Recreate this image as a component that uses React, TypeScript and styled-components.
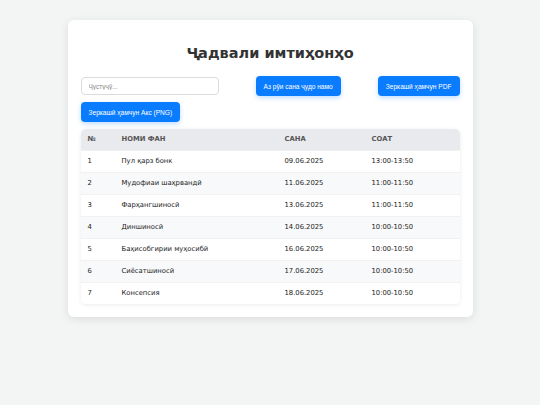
import React from "react";
import styled, { createGlobalStyle } from "styled-components";

const GlobalStyle = createGlobalStyle`
  html, body {
    margin: 0;
    padding: 0;
    background: #f3f4f4;
    font-family: "DejaVu Sans", Verdana, sans-serif;
  }
`;

const Page = styled.div`
  padding: 20px 0;
  display: flex;
  justify-content: center;
`;

const Card = styled.div`
  width: 405px;
  box-sizing: border-box;
  background: #ffffff;
  border-radius: 6px;
  box-shadow: 0 2px 8px rgba(0, 0, 0, 0.1);
  padding: 13px 13px 13px 13px;
`;

const Title = styled.h1`
  margin: 11px 0 14px;
  text-align: center;
  font-family: "DejaVu Sans", Verdana, sans-serif;
  font-size: 14.5px;
  line-height: 18px;
  font-weight: bold;
  color: #333333;
`;

const Controls = styled.div`
  display: flex;
  flex-wrap: wrap;
  justify-content: space-between;
  row-gap: 6px;
  margin-bottom: 7px;
`;

const SearchInput = styled.input`
  width: 138px;
  height: 18px;
  box-sizing: border-box;
  margin-top: 1px;
  border: 1px solid #dcdcdc;
  border-radius: 4px;
  padding: 0 7px;
  font-family: "Liberation Sans", Arial, sans-serif;
  font-size: 6.5px;
  color: #333;
  outline: none;

  &::placeholder {
    color: #8a8a8a;
  }
`;

const Button = styled.button`
  height: 20px;
  box-sizing: border-box;
  padding: 0 8px;
  border: none;
  border-radius: 4px;
  background: #0a7cff;
  color: #ffffff;
  font-family: "Liberation Sans", Arial, sans-serif;
  font-size: 6.6px;
  box-shadow: 0 2px 5px rgba(0, 123, 255, 0.25);
  cursor: pointer;
  white-space: nowrap;
`;

const TableWrap = styled.div`
  border-radius: 5px;
  overflow: hidden;
  box-shadow: 0 1px 4px rgba(0, 0, 0, 0.08);
`;

const Table = styled.table`
  width: 100%;
  border-collapse: collapse;
  table-layout: fixed;
  font-family: "DejaVu Sans", Verdana, sans-serif;
  font-size: 6.8px;
`;

const Th = styled.th<{ $w?: string }>`
  width: ${(p) => p.$w ?? "auto"};
  box-sizing: border-box;
  height: 21px;
  background: #e9eaee;
  color: #555555;
  font-weight: bold;
  text-align: left;
  text-transform: uppercase;
  padding: 0 7px;
  line-height: 8px;
  white-space: nowrap;
`;

const Tr = styled.tr<{ $alt: boolean }>`
  background: ${(p) => (p.$alt ? "#f8f9fa" : "#ffffff")};
`;

const Td = styled.td`
  box-sizing: border-box;
  height: 22px;
  padding: 0 7px;
  line-height: 8px;
  color: #222222;
  white-space: nowrap;
  border-top: 1px solid #f1f1f1;
`;

const exams = [
  { subject: "Пул қарз бонк", date: "09.06.2025", time: "13:00-13:50" },
  { subject: "Мудофиаи шаҳрвандӣ", date: "11.06.2025", time: "11:00-11:50" },
  { subject: "Фарҳангшиносӣ", date: "13.06.2025", time: "11:00-11:50" },
  { subject: "Диншиносӣ", date: "14.06.2025", time: "10:00-10:50" },
  { subject: "Баҳисобгирии муҳосибӣ", date: "16.06.2025", time: "10:00-10:50" },
  { subject: "Сиёсатшиносӣ", date: "17.06.2025", time: "10:00-10:50" },
  { subject: "Консепсия", date: "18.06.2025", time: "10:00-10:50" },
];

export default function App() {
  return (
    <>
      <GlobalStyle />
      <Page>
        <Card>
          <Title>Ҷадвали имтиҳонҳо</Title>
          <Controls>
            <SearchInput placeholder="Ҷустуҷӯ..." />
            <Button>Аз рӯи сана ҷудо намо</Button>
            <Button>Зеркашӣ ҳамчун PDF</Button>
            <Button>Зеркашӣ ҳамчун Акс (PNG)</Button>
          </Controls>
          <TableWrap>
            <Table>
              <thead>
                <tr>
                  <Th $w="34px">№</Th>
                  <Th $w="163px">Номи фан</Th>
                  <Th $w="87px">Сана</Th>
                  <Th>Соат</Th>
                </tr>
              </thead>
              <tbody>
                {exams.map((e, i) => (
                  <Tr key={i} $alt={i % 2 === 1}>
                    <Td>{i + 1}</Td>
                    <Td>{e.subject}</Td>
                    <Td>{e.date}</Td>
                    <Td>{e.time}</Td>
                  </Tr>
                ))}
              </tbody>
            </Table>
          </TableWrap>
        </Card>
      </Page>
    </>
  );
}
